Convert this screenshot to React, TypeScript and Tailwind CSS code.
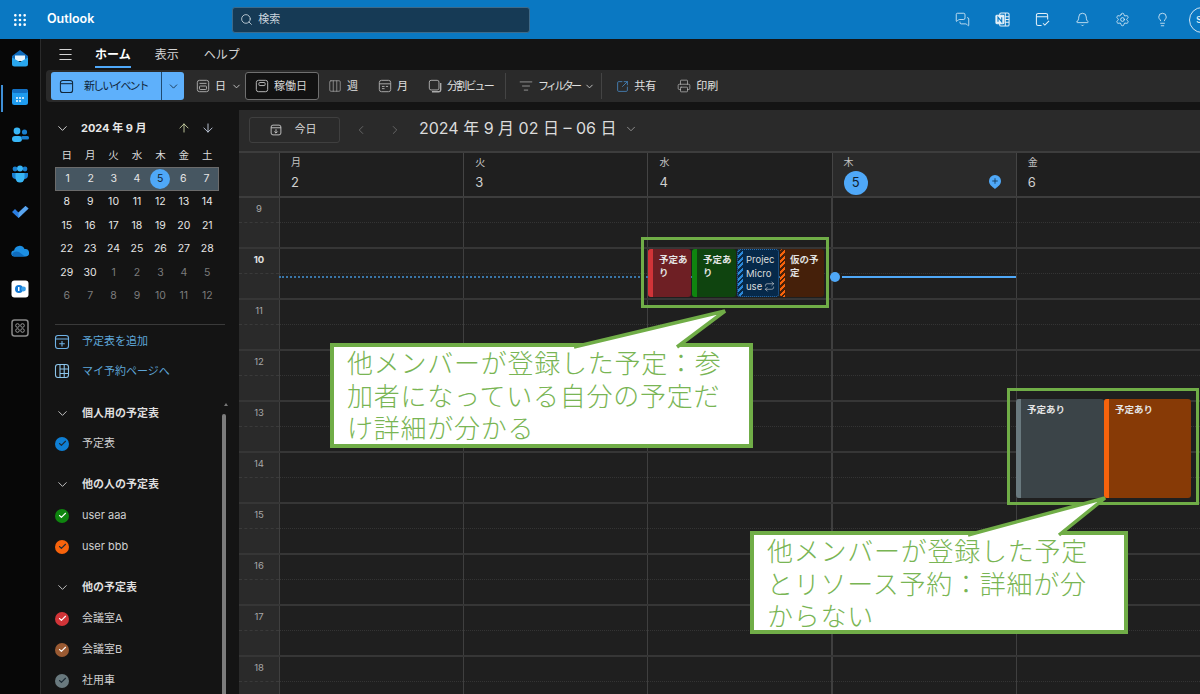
import {
  Search, Grip, Menu, ChevronDown, ChevronLeft, ChevronRight, ArrowUp, ArrowDown,
  Columns3, ListFilter, SquareArrowOutUpRight, Printer, MessagesSquare, Bell, Settings, Lightbulb, Check, Repeat, Plus,
} from "lucide-react";

const FONT = "font-['Inter','Noto_Sans_CJK_JP',sans-serif]";
const weekdays = ["日", "月", "火", "水", "木", "金", "土"];
const miniWeeks = [
  [1, 2, 3, 4, 5, 6, 7],
  [8, 9, 10, 11, 12, 13, 14],
  [15, 16, 17, 18, 19, 20, 21],
  [22, 23, 24, 25, 26, 27, 28],
  [29, 30, 1, 2, 3, 4, 5],
  [6, 7, 8, 9, 10, 11, 12],
];
const hours = [9, 10, 11, 12, 13, 14, 15, 16, 17, 18];
const days = [
  { name: "月", date: 2 },
  { name: "火", date: 3 },
  { name: "水", date: 4 },
  { name: "木", date: 5, today: true },
  { name: "金", date: 6 },
];

// small outline icons used in the ribbon
function Glyph({ kind, size = 14, className }: { kind: string; size?: number; className?: string }) {
  return (
    <svg width={size} height={size} viewBox="0 0 16 16" fill="none" stroke="currentColor" strokeWidth="1.100" className={className}>
      {kind === "split" ? (
        <>
          <rect x="1.500" y="1.500" width="11" height="11" rx="2" />
          <path d="M14.500 4.500v8a2 2 0 0 1-2 2h-8" strokeWidth="1.600" />
        </>
      ) : (
        <rect x="1.500" y="1.500" width="13" height="13" rx="2.500" />
      )}
      {kind === "new" && <path d="M1.500 5h13" />}
      {kind === "day" && <rect x="4" y="8" width="8" height="4" rx="0.800" />}
      {kind === "day" && <path d="M4 5h8" />}
      {kind === "workweek" && <rect x="4.500" y="4" width="7" height="3.500" rx="0.800" />}
      {kind === "month" && <path d="M1.500 5.500h13M4.500 8.500h3M9 8.500h2.500M4.500 11h3" />}
      {kind === "today" && <path d="M1.500 5h13M8 7v5M5.800 10 8 12.200 10.200 10" />}
      {kind === "add" && <path d="M1.500 5h13M8 7v5.500M5.200 9.700h5.600" />}
      {kind === "booking" && <path d="M6 1.500v13M6 6h8.500M6 10.500h8.500M10.200 1.500v13" />}
    </svg>
  );
}

function RailIcons() {
  return (
    <div className="relative flex flex-col items-center gap-[18.500px] pt-[9px]">
      <span className="absolute left-[1px] top-[46px] h-[27px] w-[2px] bg-[#3f8fd6]" />
      <svg width="18" height="20" viewBox="0 0 18 20">
        <path d="M1 8 9 2l8 6v4H1z" fill="#0f6cbd" />
        <path d="M4 7.500h10V13H4z" fill="#e8f6fe" />
        <path d="M1 9.500 9 14l8-4.500V16a2.500 2.500 0 0 1-2.500 2.500h-11A2.500 2.500 0 0 1 1 16z" fill="#29a8f0" />
      </svg>
      <svg width="18" height="20" viewBox="0 0 18 20">
        <rect x="1" y="2" width="16" height="16" rx="2.500" fill="#1f9cf0" />
        <rect x="1" y="2" width="16" height="4" rx="2" fill="#1270c4" />
        <path d="M5 10h2v2H5zm3 0h2v2H8zm3 0h2v2h-2zM5 13h2v2H5zm3 0h2v2H8z" fill="#bfe4fb" />
      </svg>
      <svg width="18" height="20" viewBox="0 0 18 20">
        <circle cx="6" cy="6" r="3.400" fill="#38b6f6" />
        <circle cx="13.500" cy="7" r="2.600" fill="#1a7fd0" />
        <rect x="1" y="11" width="10" height="6" rx="3" fill="#38b6f6" />
        <rect x="10" y="11" width="8" height="3.400" rx="1.500" fill="#1a7fd0" />
      </svg>
      <svg width="18" height="20" viewBox="0 0 18 20">
        <circle cx="4" cy="5" r="2.400" fill="#1a7fd0" />
        <circle cx="14" cy="5" r="2.400" fill="#1a7fd0" />
        <circle cx="9" cy="4.500" r="3" fill="#38b6f6" />
        <path d="M1 9h16v2a4 4 0 0 1-4 4H5a4 4 0 0 1-4-4z" fill="#1a7fd0" />
        <path d="M4.500 9h9v5a4.500 4.500 0 0 1-9 0z" fill="#38b6f6" />
      </svg>
      <svg width="18" height="20" viewBox="0 0 18 20">
        <path d="m1 10 3-3 3.500 3.500L14.500 4l3 2.600L7.500 16z" fill="#2a7de1" />
        <path d="m7.500 10.500 7-6.500 3 2.600L7.500 16z" fill="#5aa5ee" />
      </svg>
      <svg width="18" height="20" viewBox="0 0 18 20">
        <path d="M3.500 15.500a3 3 0 0 1-.4-6A5.500 5.500 0 0 1 13.500 8a3.800 3.800 0 0 1 1.500 7.500z" fill="#1c8fe3" />
        <path d="M1 13.500C2 11 5 9.500 8 11l6 4.500H3.500A3 3 0 0 1 1 13.500z" fill="#0f6cbd" />
      </svg>
      <svg width="18" height="20" viewBox="0 0 18 20">
        <rect x="0.500" y="1.500" width="17" height="17" rx="3" fill="#ffffff" />
        <circle cx="8" cy="10" r="4" fill="#1479d4" />
        <circle cx="12.500" cy="10" r="2.400" fill="#3aa0ea" />
        <path d="M7 8h1.500v4H7z" fill="#ffffff" />
      </svg>
      <svg width="18" height="20" viewBox="0 0 18 20">
        <rect x="1" y="2" width="16" height="16" rx="2.500" fill="none" stroke="#8a8a8a" strokeWidth="1.500" />
        <circle cx="6.500" cy="7.500" r="1.800" fill="none" stroke="#9a9a9a" />
        <circle cx="11.500" cy="7.500" r="1.800" fill="none" stroke="#9a9a9a" />
        <circle cx="6.500" cy="12.500" r="1.800" fill="none" stroke="#9a9a9a" />
        <circle cx="11.500" cy="12.500" r="1.800" fill="none" stroke="#9a9a9a" />
      </svg>
    </div>
  );
}

function MiniCalendar() {
  return (
    <div className="ml-[14px] w-[164px]">
      <div className="mt-[14px] flex h-[24px] items-center">
        <ChevronDown size={15} strokeWidth={1.500} className="text-[#ddd]" />
        <span className="ml-[11px] text-[11px] font-bold text-[#e8e8e8]">2024 年 9 月</span>
        <ArrowUp size={14} strokeWidth={1.500} className="ml-auto mr-[10px] text-[#cfd8a8]" />
        <ArrowDown size={14} strokeWidth={1.500} className="mr-[4px] text-[#c9d4e6]" />
      </div>
      <div className="mt-[4px] grid h-[23px] grid-cols-7 items-center text-center text-[10.500px] text-[#ddd]">
        {weekdays.map((d) => (
          <span key={d}>{d}</span>
        ))}
      </div>
      {miniWeeks.map((week, i) => (
        <div
          key={i}
          className={`grid h-[23.500px] grid-cols-7 items-center text-center text-[10.500px] ${
            i === 0 ? "border border-[#6b6b6b] bg-[#465661]" : ""
          }`}
        >
          {week.map((n, j) => {
            const muted = i === 5 || (i === 4 && j > 1);
            if (i === 0 && n === 5) {
              return (
                <span key={j} className="mx-auto flex h-[20px] w-[20px] items-center justify-center rounded-full bg-[#4fa8f8] text-[#10202e]">
                  5
                </span>
              );
            }
            return (
              <span key={j} className={muted ? "text-[#7c7c7c]" : "text-[#e6e6e6]"}>
                {n}
              </span>
            );
          })}
        </div>
      ))}
    </div>
  );
}

function SectionHead({ label }: { label: string }) {
  return (
    <div className="flex h-[20px] items-center pl-[14px]">
      <ChevronDown size={15} strokeWidth={1.500} className="text-[#ccc]" />
      <span className="ml-[12px] text-[11px] font-bold text-[#dedede]">{label}</span>
    </div>
  );
}

function CalRow({ label, color, dark }: { label: string; color: string; dark?: boolean }) {
  return (
    <div className="flex h-[31px] items-center pl-[14px] text-[11px] text-[#cfcfcf]">
      <span className={`flex h-[14px] w-[14px] items-center justify-center rounded-full ${color}`}>
        <Check size={9} strokeWidth={3} className={dark ? "text-[#1d2b36]" : "text-white"} />
      </span>
      <span className="ml-[13px]">{label}</span>
    </div>
  );
}

function Sidebar() {
  return (
    <aside className="relative w-[198px] shrink-0 overflow-hidden bg-[#141414]">
      <MiniCalendar />
      <div className="mx-[14px] mt-[16px] border-t border-[#3a3a3a]" />
      <div className="mt-[2px] flex h-[29px] items-center pl-[13px] text-[11px] text-[#5ea6d8]">
        <Glyph kind="add" size={16} className="text-[#6fb2e6]" />
        <span className="ml-[12px]">予定表を追加</span>
      </div>
      <div className="flex h-[30px] items-center pl-[13px] text-[11px] text-[#5ea6d8]">
        <Glyph kind="booking" size={16} className="text-[#8cc4ea]" />
        <span className="ml-[12px]">マイ予約ページへ</span>
      </div>
      <div className="mt-[17px]">
        <SectionHead label="個人用の予定表" />
        <div className="mt-[5px]">
          <CalRow label="予定表" color="bg-[#0f7fd4]" dark />
        </div>
        <div className="mt-[15px]">
          <SectionHead label="他の人の予定表" />
        </div>
        <div className="mt-[6px]">
          <CalRow label="user aaa" color="bg-[#0f850f]" />
          <CalRow label="user bbb" color="bg-[#f7630c]" dark />
        </div>
        <div className="mt-[15px]">
          <SectionHead label="他の予定表" />
        </div>
        <div className="mt-[6px]">
          <CalRow label="会議室A" color="bg-[#d13438]" />
          <CalRow label="会議室B" color="bg-[#9a5a32]" />
          <CalRow label="社用車" color="bg-[#69797e]" dark />
        </div>
      </div>
      <span className="absolute left-[183px] top-[301px] h-0 w-0 border-x-[2px] border-b-[3px] border-x-transparent border-b-[#777]" />
      <span className="absolute left-[181px] top-[312px] h-[290px] w-[4px] rounded-full bg-[#7c7c7c]" />
    </aside>
  );
}

function ToolItem({ icon, label, chevron, tracking }: { icon: React.ReactNode; label: string; chevron?: boolean; tracking?: string }) {
  return (
    <div className="flex items-center gap-[5px] text-[11px] text-[#e0e0e0]">
      {icon}
      <span className={tracking}>{label}</span>
      {chevron && <ChevronDown size={11} className="text-[#ccc]" />}
    </div>
  );
}

function Toolbar() {
  return (
    <div className="ml-[5px] flex h-[32px] items-center rounded-l-[4px] bg-[#2a2a2a] pl-[5px]">
      <div className="flex h-[28px] w-[133px] items-center rounded-[3px] bg-[#5eb0fb] text-[11px] text-[#10263a]">
        <Glyph kind="new" size={15} className="ml-[8px]" />
        <span className="ml-[10px] tracking-[-1.900px]">新しいイベント</span>
        <span className="ml-auto flex h-full w-[23px] items-center justify-center border-l border-[#1f4a70]">
          <ChevronDown size={13} strokeWidth={1.500} />
        </span>
      </div>
      <div className="ml-[12px]">
        <ToolItem icon={<Glyph kind="day" className="text-[#aaa]" />} label="日" chevron />
      </div>
      <div className="ml-[3px] flex h-[28px] w-[74px] items-center gap-[5px] rounded-[3px] border border-[#6f6f6f] bg-[#121212] pl-[9px] text-[11px] text-[#d8d8d8]">
        <Glyph kind="workweek" className="text-[#bbb]" />
        <span>稼働日</span>
      </div>
      <div className="ml-[9px]">
        <ToolItem icon={<Columns3 size={14} strokeWidth={1.200} className="text-[#aaa]" />} label="週" />
      </div>
      <div className="ml-[20px]">
        <ToolItem icon={<Glyph kind="month" className="text-[#aaa]" />} label="月" />
      </div>
      <div className="ml-[20px]">
        <ToolItem icon={<Glyph kind="split" className="text-[#aaa]" />} label="分割ビュー" tracking="tracking-[-1.800px]" />
      </div>
      <span className="ml-[12px] h-[26px] border-l border-[#444]" />
      <div className="ml-[13px]">
        <ToolItem icon={<ListFilter size={14} strokeWidth={1.200} className="text-[#bbb]" />} label="フィルター" tracking="tracking-[-2.700px]" chevron />
      </div>
      <span className="ml-[6px] h-[26px] border-l border-[#444]" />
      <div className="ml-[14px]">
        <ToolItem icon={<SquareArrowOutUpRight size={13} strokeWidth={1.400} className="text-[#4a90d0]" />} label="共有" />
      </div>
      <div className="ml-[21px]">
        <ToolItem icon={<Printer size={14} strokeWidth={1.200} className="text-[#bbb]" />} label="印刷" />
      </div>
    </div>
  );
}

function CalendarHeader() {
  return (
    <div className="flex h-[41px] shrink-0 items-center bg-[#2a2a2a] pb-[2px] pl-[10px]">
      <div className="flex h-[26px] w-[91px] items-center justify-center gap-[13px] rounded-[3px] border border-[#3f3f3f] pr-[3px] text-[11px] text-[#d8d8d8]">
        <Glyph kind="today" size={12} />
        <span>今日</span>
      </div>
      <ChevronLeft size={14} strokeWidth={1.300} className="ml-[14px] text-[#777]" />
      <ChevronRight size={14} strokeWidth={1.300} className="ml-[20px] text-[#777]" />
      <span className="mb-[3px] ml-[17px] text-[16px] text-[#dcdcdc]">2024 年 9 月 02 日 – 06 日</span>
      <ChevronDown size={14} strokeWidth={1.300} className="mb-[2px] ml-[7px] text-[#aaa]" />
    </div>
  );
}

function DayHeader() {
  return (
    <div className="flex h-[47px] shrink-0 border-y-2 border-[#3d3d3d]">
      <div className="w-[40px] shrink-0 bg-[#2a2a2a]" />
      {days.map((d) => (
        <div
          key={d.date}
          className={`relative flex-1 border-l border-[#444] pl-[11px] ${d.today ? "bg-[#2a2a2a]" : "bg-[#1f1f1f]"}`}
        >
          <div className="mt-[1px] text-[10px] leading-[17px] text-[#c4c4c4]">{d.name}</div>
          {d.today ? (
            <div className="flex h-[24px] w-[24px] items-center justify-center rounded-full bg-[#4fa8f8] text-[13px] text-[#10202e]">
              5
            </div>
          ) : (
            <div className="text-[13px] leading-[22px] text-[#d0d0d0]">{d.date}</div>
          )}
          {d.today && (
            <span className="absolute right-[15px] top-[22px] flex h-[14px] w-[12px] items-start justify-center">
              <svg width="12" height="14" viewBox="0 0 12 14" className="absolute inset-0">
                <path d="M6 14C3 11.500 0 9.500 0 6a6 6 0 0 1 12 0c0 3.500-3 5.500-6 8z" fill="#4fa8f8" />
              </svg>
              <Plus size={8} strokeWidth={2.500} className="relative mt-[2px] text-[#10304e]" />
            </span>
          )}
        </div>
      ))}
    </div>
  );
}

function EventBox({
  left,
  top,
  width,
  height,
  bar,
  bg,
  children,
}: {
  left: number;
  top: number;
  width: number;
  height: number;
  bar: string;
  bg: string;
  children: React.ReactNode;
}) {
  return (
    <div className={`absolute flex overflow-hidden rounded-[3px] ${bg}`} style={{ left, top, width, height }}>
      <span className={`w-[5px] shrink-0 ${bar}`} />
      <div className="pl-[6px] pt-[4px] text-[9.500px] font-bold leading-[13px] text-[#e4e4e4]">{children}</div>
    </div>
  );
}

function TimeGrid() {
  return (
    <div className="relative flex-1 overflow-hidden bg-[#1f1f1f]">
      {hours.map((h) => (
        <div key={h} className="flex h-[51px] border-b-2 border-[#363636]">
          <div className="w-[40px] shrink-0 bg-[#2a2a2a]">
            <div className="h-[25px] border-b border-dashed border-[#3a3a3a] pt-[4px] text-center text-[9.500px] text-[#a8a8a8]">
              <span className={h === 10 ? "font-bold text-[#e0e0e0]" : ""}>{h}</span>
            </div>
          </div>
          {days.map((d) => (
            <div key={d.date} className={`flex-1 border-l border-[#3f3f3f] ${d.today ? "border-l-2" : ""}`}>
              <div className="h-[25px] border-b border-dotted border-[#343434]" />
            </div>
          ))}
        </div>
      ))}

      {/* current time */}
      <div className="absolute left-[40px] top-[78px] w-[553px] border-t-2 border-dotted border-[#3a76a8]" />
      <div className="absolute left-[591px] top-[74px] h-[10px] w-[10px] rounded-full bg-[#4fa8f8]" />
      <div className="absolute left-[603px] top-[78px] h-[2px] w-[174px] bg-[#4fa8f8]" />

      {/* 水曜の予定 */}
      <EventBox left={409} top={51} width={43} height={48} bar="bg-[#d13438]" bg="bg-[#6e1f24]">
        予定あり
      </EventBox>
      <EventBox left={453} top={51} width={44} height={48} bar="bg-[#0f850f]" bg="bg-[#0f440f]">
        予定あり
      </EventBox>
      <div className="absolute left-[498px] top-[51px] flex h-[48px] w-[42px] overflow-hidden rounded-[3px] border border-dotted border-[#2a6fb0] bg-[#06294a]">
        <span className="w-[5px] shrink-0 bg-[repeating-linear-gradient(135deg,#2b88d8_0,#2b88d8_2px,#0a2a48_2px,#0a2a48_4px)]" />
        <div className="pl-[3px] pt-[3px] text-[9.500px] leading-[13.500px] text-[#dcdcdc]">
          <div className="whitespace-nowrap">Projec</div>
          <div>Micro</div>
          <div className="flex items-center gap-[2px]">
            use <Repeat size={11} strokeWidth={1.300} />
          </div>
        </div>
      </div>
      <div className="absolute left-[541px] top-[51px] flex h-[48px] w-[44px] overflow-hidden rounded-[3px] bg-[#45200a]">
        <span className="w-[5px] shrink-0 bg-[repeating-linear-gradient(135deg,#f7630c_0,#f7630c_2px,#45200a_2px,#45200a_4px)]" />
        <div className="pl-[5px] pt-[4px] text-[9.500px] font-bold leading-[13px] text-[#e0e0e0]">仮の予定</div>
      </div>

      {/* 金曜の予定 */}
      <EventBox left={777} top={201} width={88} height={99} bar="bg-[#69797e]" bg="bg-[#3b4448]">
        予定あり
      </EventBox>
      <EventBox left={865} top={201} width={87} height={99} bar="bg-[#f7630c]" bg="bg-[#873a06]">
        予定あり
      </EventBox>
    </div>
  );
}

function Callout({
  left,
  top,
  width,
  height,
  tail,
  text,
}: {
  left: number;
  top: number;
  width: number;
  height: number;
  tail: string;
  text: string;
}) {
  return (
    <>
      <div className="absolute border-[4px] border-[#70ad47] bg-white pl-[13px]" style={{ left, top, width, height }}>
        <div className="mt-[1px] whitespace-pre-line text-[26px] font-light leading-[32.500px] tracking-[0.750px] text-[#79b554]">
          {text}
        </div>
      </div>
      <svg className="absolute left-0 top-0" width="1200" height="694">
        <polyline points={tail} fill="#ffffff" stroke="#70ad47" strokeWidth="3.500" />
      </svg>
    </>
  );
}

export default function App() {
  return (
    <div className={`relative flex h-[694px] w-[1200px] flex-col overflow-hidden bg-[#141414] ${FONT}`}>
      <header className="flex h-[39px] shrink-0 items-center overflow-hidden bg-[#0a78c2] text-white">
        <Grip size={16} strokeWidth={2} className="ml-[12px]" />
        <span className="ml-[19px] text-[12.500px] font-semibold">Outlook</span>
        <div className="ml-[138px] flex h-[26px] w-[298px] items-center rounded-[3px] border border-[#3d6a8a] bg-[#163a55] pl-[7px] text-[11px] text-[#c9d4dc]">
          <Search size={13} strokeWidth={1.600} />
          <span className="ml-[5px]">検索</span>
        </div>
        <div className="ml-auto flex items-center gap-[25px] text-[#e4f0f8]">
          <MessagesSquare size={15} strokeWidth={1.300} />
          <svg width="15" height="15" viewBox="0 0 16 16" fill="none" stroke="currentColor" strokeWidth="1.100">
            <rect x="5" y="1" width="10" height="14" rx="1.500" />
            <path d="M11 1v14M11 5h4M11 8h4M11 11h4" />
            <rect x="1" y="3.500" width="8.500" height="9" rx="1" fill="#e4f0f8" />
            <path d="M3.200 10.500v-5l4 5v-5" stroke="#0a78c2" strokeWidth="1.200" />
          </svg>
          <svg width="15" height="15" viewBox="0 0 16 16" fill="none" stroke="currentColor" strokeWidth="1.100">
            <path d="M7 14.500H3.500a2 2 0 0 1-2-2v-9a2 2 0 0 1 2-2h8a2 2 0 0 1 2 2V8" />
            <path d="M1.500 5h12M8.500 12l2 2 4.500-4.500" />
          </svg>
          <Bell size={15} strokeWidth={1.300} />
          <Settings size={15} strokeWidth={1.300} />
          <Lightbulb size={15} strokeWidth={1.300} />
          <span className="-mr-[15px] ml-[-6px] flex h-[26px] w-[26px] shrink-0 items-center rounded-full border border-[#cfe4f3] pl-[6px] text-[11px]">
            s
          </span>
        </div>
      </header>
      <div className="flex flex-1 overflow-hidden">
        <nav className="w-[41px] shrink-0 border-r border-[#2a2a2a] bg-[#070707]">
          <RailIcons />
        </nav>
        <main className="flex flex-1 flex-col overflow-hidden">
          <div className="flex h-[31px] shrink-0 items-center text-[12px] text-[#d4d4d4]">
            <Menu size={17} strokeWidth={1.500} className="ml-[16px]" />
            <span className="relative ml-[21px] font-bold text-white">
              ホーム
              <span className="absolute -bottom-[4px] left-0 h-[2px] w-full bg-[#4fa8f8]" />
            </span>
            <span className="ml-[24px]">表示</span>
            <span className="ml-[25px]">ヘルプ</span>
          </div>
          <Toolbar />
          <div className="flex flex-1 overflow-hidden">
            <Sidebar />
            <section className="mt-[8px] flex flex-1 flex-col overflow-hidden">
              <CalendarHeader />
              <DayHeader />
              <TimeGrid />
            </section>
          </div>
        </main>
      </div>

      <div className="absolute left-[641px] top-[237px] h-[71px] w-[188px] border-[3px] border-[#70ad47]" />
      <div className="absolute left-[1007px] top-[388px] h-[117px] w-[192px] border-[3px] border-[#70ad47]" />
      <Callout
        left={330}
        top={343}
        width={423}
        height={105}
        tail="574,347 725,311 677,347"
        text={"他メンバーが登録した予定：参\n加者になっている自分の予定だ\nけ詳細が分かる"}
      />
      <Callout
        left={750}
        top={531}
        width={378}
        height={103}
        tail="968,535 1105,498 1059,535"
        text={"他メンバーが登録した予定\nとリソース予約：詳細が分\nからない"}
      />
    </div>
  );
}
